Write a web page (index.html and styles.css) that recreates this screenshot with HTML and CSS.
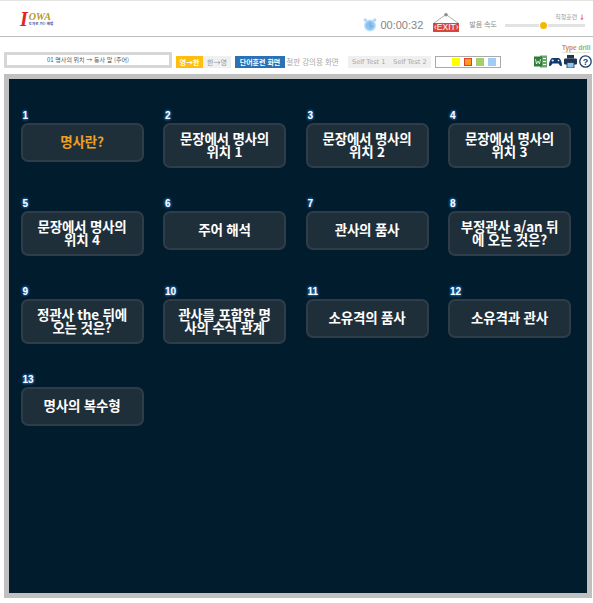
FILE: index.html
```html
<!DOCTYPE html>
<html lang="ko">
<head>
    <meta charset="UTF-8">
    <meta name="viewport" content="width=device-width, initial-scale=1.0">
    <title>Type Drill</title>
    <link rel="stylesheet" href="styles.css">
</head>
<body>
    <div class="header">
        <div class="logo">
            <span class="logo-i">I</span>
            <div class="logo-right">
                <span class="logo-owa">OWA</span>
                <span class="logo-sub">토과로 가는 해법</span>
            </div>
        </div>
        <div class="header-right">
            <svg class="clock" width="14" height="14" viewBox="0 0 14 14">
                <circle cx="7" cy="7.5" r="5.2" fill="#8cc3ee" stroke="#bcdcf6" stroke-width="1.6"/>
                <circle cx="2.3" cy="2" r="1.8" fill="#b5d8f5"/>
                <circle cx="11.7" cy="2" r="1.8" fill="#b5d8f5"/>
                <path d="M7 4.5V8L9.5 9" fill="none" stroke="#6aa8e0" stroke-width="1"/>
            </svg>
            <span class="timer">00:00:32</span>
            <div class="exit">
                <svg width="26" height="10" viewBox="0 0 26 10">
                    <path d="M1 10L13 1.500L25 10" fill="none" stroke="#999" stroke-width="0.8"/>
                    <circle cx="13" cy="1.800" r="1.800" fill="#8a8f98"/>
                </svg>
                <span class="exit-label">‹EXIT›</span>
            </div>
            <span class="speed-label">발음 속도</span>
            <div class="speed">
                <span class="speed-top">직청훈련 <b>↓</b></span>
                <div class="slider"><span class="knob"></span></div>
            </div>
        </div>
    </div>

    <div class="toolbar">
        <div class="lesson"><div class="lesson-box">01 명사의 위치 → 동사 앞 (주어)</div></div>
        <div class="btn btn-yellow">영→한</div>
        <div class="btn btn-grey">한→영</div>
        <div class="btn btn-blue">단어훈련 화면</div>
        <div class="btn btn-plain">철판 강의용 화면</div>
        <div class="tests">
            <span>Self Test 1</span>
            <span>Self Test 2</span>
        </div>
        <div class="swatches">
            <span class="swatch" style="background: #ffffff"></span>
            <span class="swatch" style="background: #ffff00"></span>
            <span class="swatch swatch-on" style="background: #ff9922"></span>
            <span class="swatch" style="background: #a3d06a"></span>
            <span class="swatch" style="background: #a0cdf5"></span>
        </div>
        <div class="tools">
            <div class="type-drill"><span class="type">Type</span> <span class="drill">drill</span></div>
            <div class="icons">
                <svg width="13" height="13" viewBox="0 0 13 13">
                    <rect x="6" y="0.500" width="7" height="12" fill="#6aa56c"/>
                    <rect x="0" y="1.500" width="8" height="10" fill="#2f7d3c"/>
                    <path d="M9 3.500h3M9 6.500h3M9 9.500h3" stroke="#fff" stroke-width="1"/>
                    <path d="M1.500 4l1 5 1.500-3 1.500 3 1-5" fill="none" stroke="#fff" stroke-width="0.8"/>
                </svg>
                <svg width="13" height="13" viewBox="0 0 13 13">
                    <path d="M3.500 3h6C11.500 3 13 8 13 10c0 1.500-1.500 1.500-2.500 0L9.500 8.500h-6L2.500 10C1.500 11.500 0 11.500 0 10 0 8 1.500 3 3.500 3z" fill="#123a6e"/>
                    <circle cx="9.500" cy="5.500" r="0.800" fill="#fff"/>
                    <path d="M2.500 5.500h2.500M3.750 4.250v2.500" stroke="#fff" stroke-width="0.700"/>
                </svg>
                <svg width="13" height="13" viewBox="0 0 13 13">
                    <rect x="3" y="0" width="7" height="3.500" fill="#1d3550"/>
                    <rect x="0" y="3.500" width="13" height="6" rx="1" fill="#1d3550"/>
                    <rect x="3" y="7.500" width="7" height="5.500" fill="#8cc6ee" stroke="#1d3550" stroke-width="0.800"/>
                </svg>
                <svg width="13" height="13" viewBox="0 0 13 13">
                    <circle cx="6.500" cy="6.500" r="5.700" fill="#fff" stroke="#1c3f6e" stroke-width="1.300"/>
                    <text x="6.500" y="9.800" class="help-mark">?</text>
                </svg>
            </div>
        </div>
    </div>

    <div class="panel">
        <div class="grid">
            <div class="item"><span class="num">1</span><div class="card card-active">명사란?</div></div>
            <div class="item"><span class="num">2</span><div class="card">문장에서 명사의 위치 1</div></div>
            <div class="item"><span class="num">3</span><div class="card">문장에서 명사의 위치 2</div></div>
            <div class="item"><span class="num">4</span><div class="card">문장에서 명사의 위치 3</div></div>
            <div class="item"><span class="num">5</span><div class="card">문장에서 명사의 위치 4</div></div>
            <div class="item"><span class="num">6</span><div class="card">주어 해석</div></div>
            <div class="item"><span class="num">7</span><div class="card">관사의 품사</div></div>
            <div class="item"><span class="num">8</span><div class="card">부정관사 a/an 뒤에 오는 것은?</div></div>
            <div class="item"><span class="num">9</span><div class="card">정관사 the 뒤에 오는 것은?</div></div>
            <div class="item"><span class="num">10</span><div class="card">관사를 포함한 명사의 수식 관계</div></div>
            <div class="item"><span class="num">11</span><div class="card">소유격의 품사</div></div>
            <div class="item"><span class="num">12</span><div class="card">소유격과 관사</div></div>
            <div class="item"><span class="num">13</span><div class="card">명사의 복수형</div></div>
        </div>
    </div>
</body>
</html>
```

FILE: styles.css
```css
* {
    box-sizing: border-box;
}
body {
    margin: 0;
    height: 603px;
    overflow: hidden;
    background: #ffffff;
    font-family: "Noto Sans CJK KR", "Noto Sans", sans-serif;
    color: #888888;
}
.header {
    height: 37px;
    border-top: 1px solid #e4e4e4;
    border-bottom: 1px solid #bdbdbd;
    display: flex;
    justify-content: space-between;
    align-items: flex-end;
    padding: 0 8px 4px 20px;
}
.logo {
    display: flex;
    align-items: flex-start;
    margin-bottom: 6px;
}
.logo-i {
    font-family: "Liberation Serif", serif;
    font-style: italic;
    font-weight: bold;
    font-size: 20px;
    line-height: 14px;
    color: #e2222e;
}
.logo-right {
    display: flex;
    flex-direction: column;
    margin-left: 1px;
}
.logo-owa {
    font-family: "Liberation Serif", serif;
    font-style: italic;
    font-weight: bold;
    font-size: 10px;
    line-height: 9px;
    color: #b59a1e;
}
.logo-sub {
    font-size: 3.500px;
    line-height: 5px;
    font-weight: bold;
    color: #3a4a9a;
    white-space: nowrap;
}
.header-right {
    display: flex;
    align-items: flex-end;
}
.clock {
    margin: 0 3px 0 0;
}
.timer {
    font-family: "Liberation Sans", sans-serif;
    font-size: 11px;
    line-height: 13px;
    color: #858585;
    margin-right: 10px;
}
.exit {
    display: flex;
    flex-direction: column;
    align-items: center;
    width: 26px;
}
.exit svg {
    display: block;
}
.exit-label {
    display: block;
    width: 26px;
    height: 9px;
    background: #d9463c;
    color: #ffffff;
    font-family: "Liberation Sans", sans-serif;
    font-size: 8.500px;
    line-height: 9px;
    text-align: center;
    white-space: nowrap;
}
.speed-label {
    font-size: 7px;
    line-height: 10px;
    color: #8a8a8a;
    margin: 0 8px 3px 10px;
}
.speed {
    width: 80px;
}
.speed-top {
    display: block;
    font-size: 6px;
    line-height: 8px;
    text-align: right;
    color: #999999;
    margin-bottom: 3px;
}
.speed-top b {
    color: #dd3333;
}
.slider {
    position: relative;
    height: 3px;
    background: #e2e2e2;
    margin-bottom: 5px;
}
.knob {
    position: absolute;
    left: 35px;
    top: -2px;
    width: 7px;
    height: 7px;
    border-radius: 50%;
    background: #f5b800;
    box-shadow: 0 0 0 1px #ffffff;
}
.toolbar {
    height: 37px;
    display: flex;
    align-items: flex-end;
    padding: 0 0 6px 4px;
}
.lesson {
    width: 168px;
    height: 16px;
    background: #d6d6d6;
    padding: 3px;
}
.lesson-box {
    height: 10px;
    background: #ffffff;
    font-size: 6px;
    line-height: 10px;
    text-align: center;
    color: #555555;
}
.btn {
    height: 12px;
    font-size: 7px;
    line-height: 12px;
    text-align: center;
}
.btn-yellow {
    width: 27px;
    margin-left: 4px;
    background: #ffbe0e;
    color: #ffffff;
    font-weight: bold;
}
.btn-grey {
    width: 28px;
    background: #f0f0f0;
    color: #999999;
}
.btn-blue {
    width: 50px;
    margin-left: 4px;
    background: #2a72b5;
    color: #ffffff;
    font-weight: bold;
}
.btn-plain {
    width: 55px;
    font-size: 7.500px;
    color: #aaaaaa;
    white-space: nowrap;
    margin-right: 8px;
}
.tests {
    display: flex;
    gap: 8px;
    height: 12px;
    padding: 0 4px;
    background: #f0f0f0;
    font-family: "DejaVu Sans", sans-serif;
    font-size: 6.500px;
    line-height: 12px;
    color: #a5a5a5;
    white-space: nowrap;
}
.swatches {
    display: flex;
    gap: 4px;
    align-items: center;
    height: 12px;
    margin-left: 4px;
    padding: 0 4px;
    border: 1px solid #aaaaaa;
}
.swatch {
    width: 8px;
    height: 8px;
}
.swatch-on {
    border: 1px solid #dd4422;
}
.tools {
    margin-left: auto;
    width: 60px;
    padding-right: 1px;
    text-align: right;
}
.type-drill {
    font-family: "Liberation Sans", sans-serif;
    font-size: 6.500px;
    line-height: 8px;
    font-weight: bold;
    margin: 0 2px 2px 29px;
    border-bottom: 1px solid #e2e8d8;
    white-space: nowrap;
}
.type {
    color: #d98a4a;
}
.drill {
    color: #8ab56a;
}
.icons {
    display: flex;
    justify-content: flex-end;
    gap: 2px;
}
.icons svg {
    display: block;
}
.help-mark {
    font-family: "Liberation Sans", sans-serif;
    font-size: 9px;
    font-weight: bold;
    text-anchor: middle;
    fill: #1c3f6e;
}
.panel {
    height: 524px;
    margin: 0 1px 0 4px;
    border: 5px solid #c0c0c0;
    background: #011c2d;
    padding: 32px 0 0 11.500px;
}
.grid {
    display: grid;
    grid-template-columns: repeat(4, 142.500px);
    grid-auto-rows: 88px;
}
.item {
    width: 123px;
}
.num {
    display: block;
    height: 12px;
    padding-left: 2px;
    font-family: "Liberation Sans", sans-serif;
    font-size: 10px;
    line-height: 10px;
    font-weight: bold;
    color: #ffffff;
    text-shadow: 0 0 3px #2f8ff0, 0 0 3px #2f8ff0;
}
.card {
    min-height: 39px;
    display: flex;
    align-items: center;
    justify-content: center;
    padding: 6.500px 10.500px 8.500px;
    border: 2px solid #2e3d49;
    border-radius: 7px;
    background: #1f2f3a;
    color: #ffffff;
    font-size: 13.500px;
    font-weight: bold;
    line-height: 13px;
    text-align: center;
    letter-spacing: -0.200px;
    word-break: break-all;
}
.card-active {
    color: #f0a020;
}
```
